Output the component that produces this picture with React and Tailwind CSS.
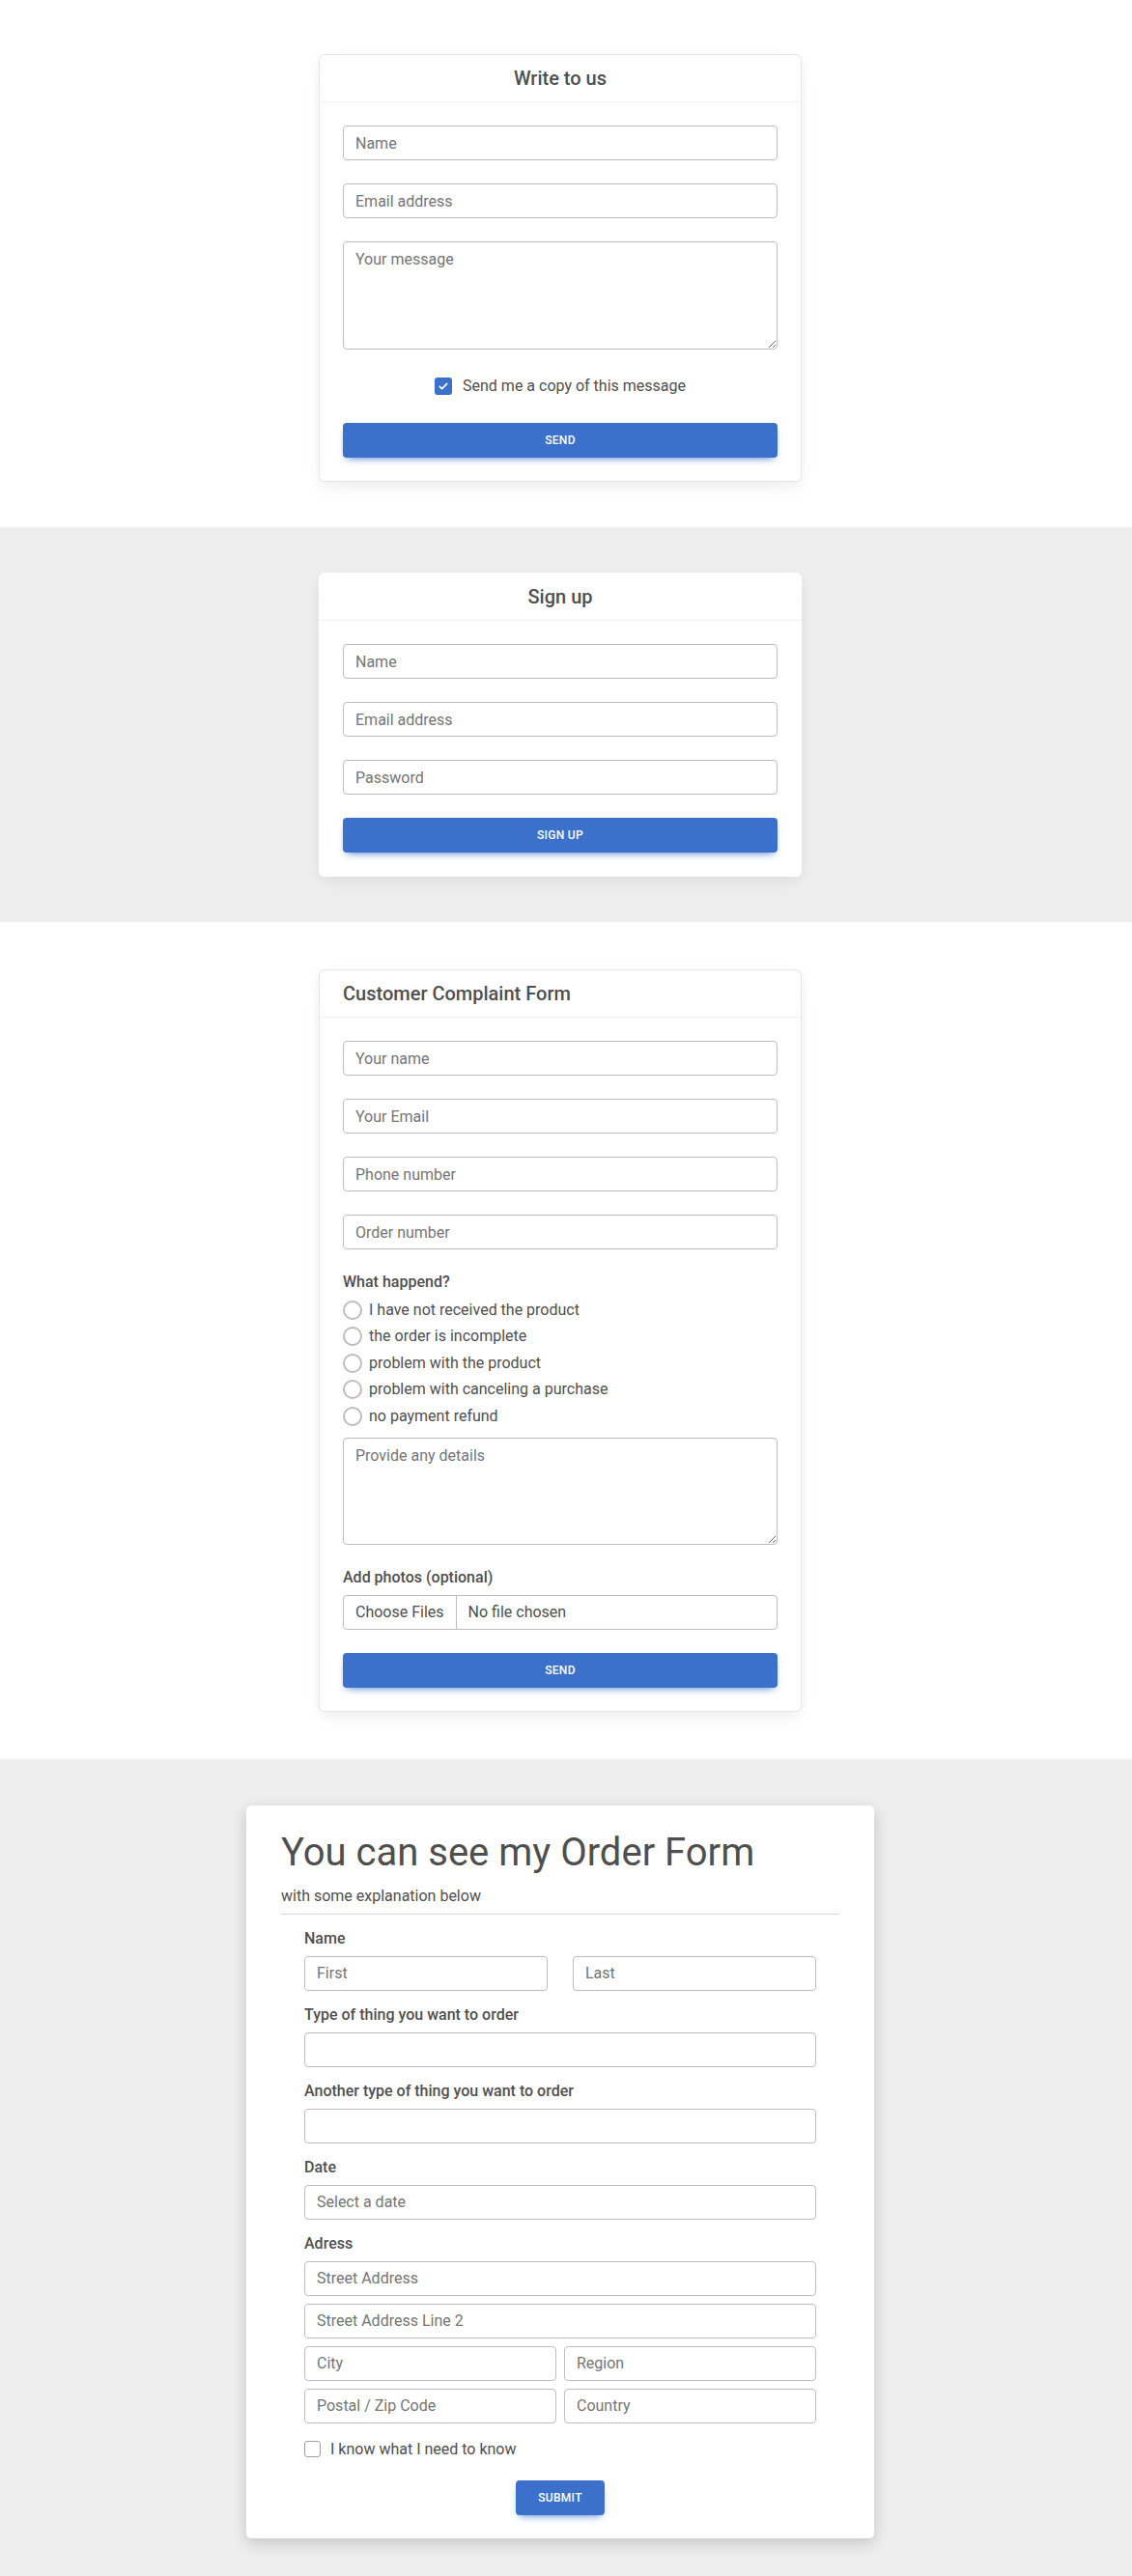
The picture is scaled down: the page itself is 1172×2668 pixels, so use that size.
import { useState } from 'react'

const inputCls =
  'block w-full h-[36px] rounded-[4px] border border-[#bdbdbd] bg-white px-3 text-base text-[#4f4f4f] placeholder:text-[#757575] outline-none'

const btnCls =
  'block h-[36px] rounded-[4px] bg-[#3b71ca] text-[12px] font-medium uppercase tracking-[0.3px] text-white shadow-[0_4px_9px_-4px_#3b71ca]'

function Card({ children, className = '' }) {
  return (
    <div className={`w-[500px] rounded-[6px] border border-[#e5e5e5] bg-white shadow-[0_2px_15px_-3px_rgba(0,0,0,0.07),0_10px_20px_-2px_rgba(0,0,0,0.04)] ${className}`}>
      {children}
    </div>
  )
}

function CardHeader({ title, center = true }) {
  return (
    <div className={`flex h-[49px] items-center border-b border-[#f3f3f3] px-6 ${center ? 'justify-center' : 'justify-start'}`}>
      <h2 className="text-[20px] font-medium text-[#4f4f4f]">{title}</h2>
    </div>
  )
}

function CheckIcon() {
  return (
    <svg viewBox="0 0 16 16" className="h-[12px] w-[12px]" fill="none" stroke="white" strokeWidth="2.2" strokeLinecap="round" strokeLinejoin="round">
      <path d="M3 8.5l3.2 3L13 4.5" />
    </svg>
  )
}

function WriteToUs() {
  const [copy, setCopy] = useState(true)
  return (
    <Card>
      <CardHeader title="Write to us" />
      <div className="px-6 pt-6 pb-6">
        <input className={inputCls} placeholder="Name" />
        <input className={`${inputCls} mt-6`} placeholder="Email address" />
        <textarea className="mt-6 block h-[112px] w-full rounded-[4px] border border-[#bdbdbd] px-3 py-[6px] text-base text-[#4f4f4f] placeholder:text-[#757575] outline-none" placeholder="Your message" />
        <label className="mt-[25px] flex h-[26px] cursor-pointer items-center justify-center gap-[11px]" onClick={() => setCopy(!copy)}>
          <span className={`flex h-[18px] w-[18px] items-center justify-center rounded-[3px] ${copy ? 'bg-[#3b71ca]' : 'border-2 border-[#9e9e9e]'}`}>
            {copy && <CheckIcon />}
          </span>
          <span className="text-base text-[#4f4f4f]">Send me a copy of this message</span>
        </label>
        <button className={`${btnCls} mt-[25px] w-full`}>Send</button>
      </div>
    </Card>
  )
}

function SignUp() {
  return (
    <Card className="border-transparent">
      <CardHeader title="Sign up" />
      <div className="px-6 pt-6 pb-6">
        <input className={inputCls} placeholder="Name" />
        <input className={`${inputCls} mt-6`} placeholder="Email address" />
        <input className={`${inputCls} mt-6`} type="password" placeholder="Password" />
        <button className={`${btnCls} mt-6 w-full`}>Sign up</button>
      </div>
    </Card>
  )
}

const reasons = [
  'I have not received the product',
  'the order is incomplete',
  'problem with the product',
  'problem with canceling a purchase',
  'no payment refund',
]

function Complaint() {
  const [picked, setPicked] = useState(null)
  return (
    <Card>
      <CardHeader title="Customer Complaint Form" center={false} />
      <div className="px-6 pt-6 pb-6">
        <input className={inputCls} placeholder="Your name" />
        <input className={`${inputCls} mt-6`} placeholder="Your Email" />
        <input className={`${inputCls} mt-6`} placeholder="Phone number" />
        <input className={`${inputCls} mt-6`} placeholder="Order number" />
        <p className="mt-6 text-base font-medium leading-[20px] text-[#4f4f4f]">What happend?</p>
        <div className="mt-[5px]">
          {reasons.map((r, i) => (
            <label key={r} className="flex h-[27.5px] cursor-pointer items-center gap-[7px]" onClick={() => setPicked(i)}>
              <span className="flex h-[20px] w-[20px] items-center justify-center rounded-full border-2 border-[#bdbdbd]">
                {picked === i && <span className="h-[8px] w-[8px] rounded-full bg-[#3b71ca]" />}
              </span>
              <span className="text-base text-[#4f4f4f]">{r}</span>
            </label>
          ))}
        </div>
        <textarea className="mt-[8px] block h-[111px] w-full rounded-[4px] border border-[#bdbdbd] px-3 py-[6px] text-base text-[#4f4f4f] placeholder:text-[#757575] outline-none" placeholder="Provide any details" />
        <p className="mt-6 text-base font-medium leading-[20px] text-[#4f4f4f]">Add photos (optional)</p>
        <div className="mt-[8px] flex h-[36px] w-full overflow-hidden rounded-[4px] border border-[#bdbdbd] text-base text-[#4f4f4f]">
          <span className="flex items-center border-r border-[#bdbdbd] px-3">Choose Files</span>
          <span className="flex items-center px-3">No file chosen</span>
        </div>
        <button className={`${btnCls} mt-6 w-full`}>Send</button>
      </div>
    </Card>
  )
}

function Label({ children, className = '' }) {
  return <p className={`mb-[8px] text-base font-medium leading-[20px] text-[#4f4f4f] ${className}`}>{children}</p>
}

function OrderForm() {
  const [know, setKnow] = useState(false)
  return (
    <div className="w-[650px] rounded-[5px] bg-white px-9 pt-[25px] pb-6 shadow-[0_5px_16px_rgba(0,0,0,0.18)]">
      <h1 className="text-[40px] font-normal leading-[48px] text-[#4f4f4f]">You can see my Order Form</h1>
      <p className="mt-[9px] border-b border-[#d6d6d6] pb-[6px] text-base font-normal leading-[24px] text-[#4f4f4f]">with some explanation below</p>
      <div className="px-6 pt-[15px]">
        <Label>Name</Label>
        <div className="grid grid-cols-2 gap-[26px]">
          <input className={inputCls} placeholder="First" />
          <input className={inputCls} placeholder="Last" />
        </div>
        <Label className="mt-[15px]">Type of thing you want to order</Label>
        <input className={inputCls} />
        <Label className="mt-[15px]">Another type of thing you want to order</Label>
        <input className={inputCls} />
        <Label className="mt-[15px]">Date</Label>
        <input className={inputCls} placeholder="Select a date" />
        <Label className="mt-[15px]">Adress</Label>
        <div className="flex flex-col gap-[8px]">
          <input className={inputCls} placeholder="Street Address" />
          <input className={inputCls} placeholder="Street Address Line 2" />
          <div className="grid grid-cols-2 gap-[8px]">
            <input className={inputCls} placeholder="City" />
            <input className={inputCls} placeholder="Region" />
          </div>
          <div className="grid grid-cols-2 gap-[8px]">
            <input className={inputCls} placeholder="Postal / Zip Code" />
            <input className={inputCls} placeholder="Country" />
          </div>
        </div>
        <label className="mt-[17px] flex h-[20px] cursor-pointer items-center gap-[10px]" onClick={() => setKnow(!know)}>
          <span className={`flex h-[17px] w-[17px] items-center justify-center rounded-[3px] ${know ? 'bg-[#3b71ca]' : 'border-[1.5px] border-[#9e9e9e]'}`}>
            {know && <CheckIcon />}
          </span>
          <span className="text-base text-[#4f4f4f]">I know what I need to know</span>
        </label>
        <div className="mt-[22px] flex justify-center">
          <button className={`${btnCls} w-[92px]`}>Submit</button>
        </div>
      </div>
    </div>
  )
}

export default function App() {
  return (
    <div className="min-h-[2668px] bg-[#eeeeee] font-['Roboto',sans-serif]">
      <section className="flex justify-center bg-white pt-14 pb-[47px] pr-3">
        <WriteToUs />
      </section>
      <section className="flex justify-center bg-[#eeeeee] py-[47px] pr-3">
        <SignUp />
      </section>
      <section className="flex justify-center bg-white py-[49px] pr-3">
        <Complaint />
      </section>
      <section className="flex justify-center bg-[#eeeeee] pt-12 pb-10 pr-3">
        <OrderForm />
      </section>
    </div>
  )
}
